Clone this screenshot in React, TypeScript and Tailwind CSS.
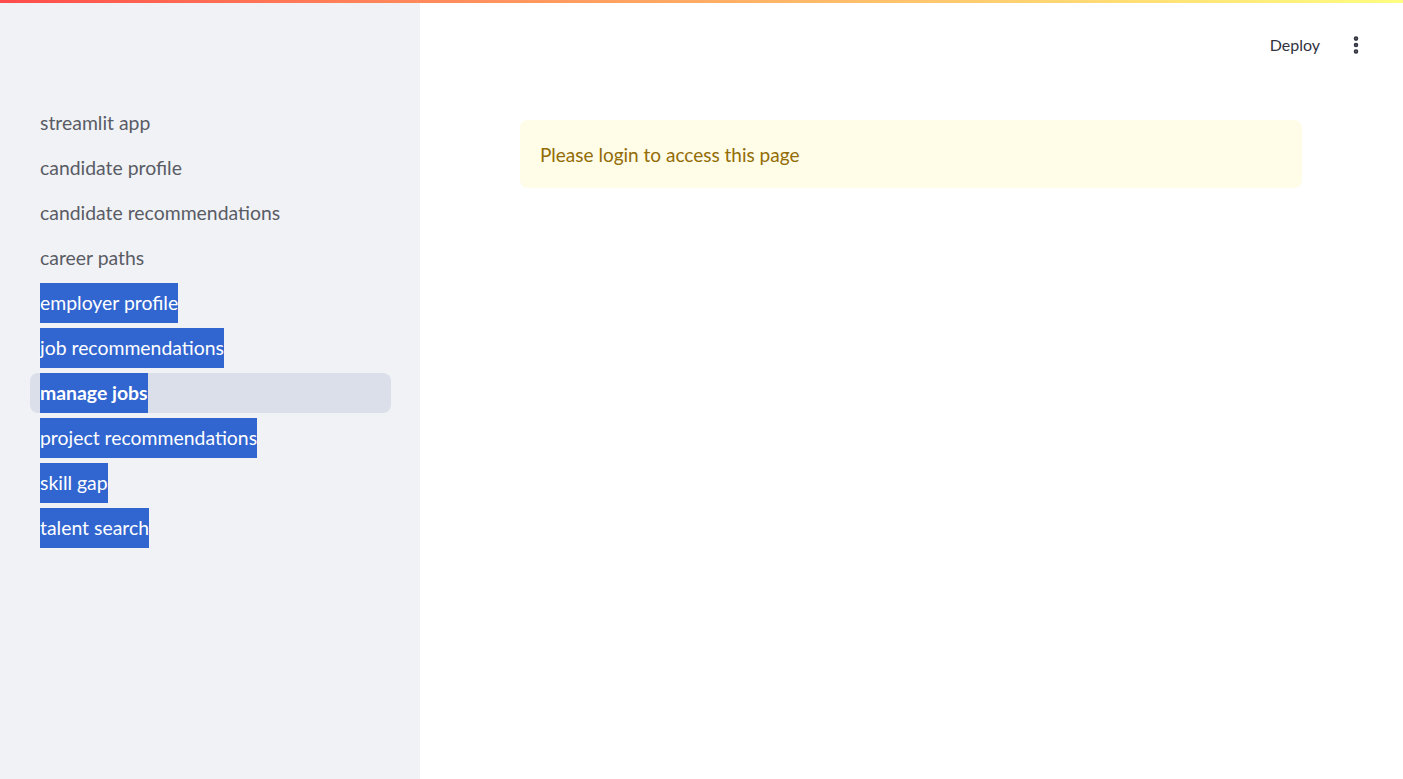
import { MoreVertical } from 'lucide-react'

const links = [
  { label: 'streamlit app', highlighted: false },
  { label: 'candidate profile', highlighted: false },
  { label: 'candidate recommendations', highlighted: false },
  { label: 'career paths', highlighted: false },
  { label: 'employer profile', highlighted: true },
  { label: 'job recommendations', highlighted: true },
  { label: 'manage jobs', highlighted: true, active: true },
  { label: 'project recommendations', highlighted: true },
  { label: 'skill gap', highlighted: true },
  { label: 'talent search', highlighted: true },
]

export default function App() {
  return (
    <div className="relative flex h-[779px] w-full overflow-hidden bg-white font-['Lato',sans-serif]">
      {/* top decoration */}
      <div className="absolute left-0 right-0 top-0 z-10 h-[3px] bg-gradient-to-r from-[#ff4b4b] to-[#fffd80]" />

      {/* sidebar */}
      <aside className="w-[420px] shrink-0 bg-[#f0f2f6] px-[30px] pt-[103px]">
        <nav className="flex w-[361px] flex-col gap-[5px]">
          {links.map((l) => (
            <div
              key={l.label}
              className={`flex h-[40px] items-center rounded-[8px] px-[10px] ${l.active ? 'bg-[#dadfe9]' : ''}`}
            >
              {l.highlighted ? (
                <span
                  className={`h-[40px] bg-[#3165d0] text-[19.4px] leading-[40px] text-white ${l.active ? 'font-bold' : ''}`}
                >
                  {l.label}
                </span>
              ) : (
                <span className="text-[19.4px] leading-[40px] text-[#5a5c65]">{l.label}</span>
              )}
            </div>
          ))}
        </nav>
      </aside>

      {/* main */}
      <main className="relative flex-1">
        <header className="flex h-[90px] items-center justify-end gap-[25px] pr-[36px]">
          <span className="text-[16px] text-[#31333f]">Deploy</span>
          <MoreVertical className="h-[22px] w-[22px] text-[#31333f]" strokeWidth={3} />
        </header>
        <div className="px-[100px] pt-[30px]">
          <div className="w-[782px] rounded-[8px] bg-[#fffce7] px-[20px] pt-[21px] pb-[19px]">
            <p className="text-[19px] leading-[28px] text-[#926c05]">Please login to access this page</p>
          </div>
        </div>
      </main>
    </div>
  )
}
